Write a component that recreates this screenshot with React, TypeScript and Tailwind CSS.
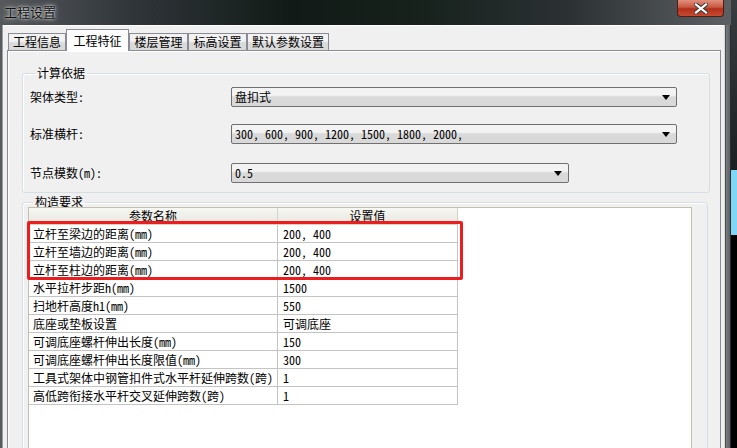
const FONT = '"Noto Sans Mono CJK SC", "Noto Sans CJK SC", sans-serif';

const rows = [
  ["立杆至梁边的距离(mm)", "200, 400"],
  ["立杆至墙边的距离(mm)", "200, 400"],
  ["立杆至柱边的距离(mm)", "200, 400"],
  ["水平拉杆步距h(mm)", "1500"],
  ["扫地杆高度h1(mm)", "550"],
  ["底座或垫板设置", "可调底座"],
  ["可调底座螺杆伸出长度(mm)", "150"],
  ["可调底座螺杆伸出长度限值(mm)", "300"],
  ["工具式架体中钢管扣件式水平杆延伸跨数(跨)", "1"],
  ["高低跨衔接水平杆交叉延伸跨数(跨)", "1"],
];

const tabs = [
  { label: "工程信息", w: "w-[58px]" },
  { label: "工程特征", w: "w-[63px]", active: true },
  { label: "楼层管理", w: "w-[59px]" },
  { label: "标高设置", w: "w-[59px]" },
  { label: "默认参数设置", w: "w-[82px]" },
];

const Arrow = () => (
  <svg width="8" height="5" viewBox="0 0 8 5" className="shrink-0">
    <polygon points="0,0 8,0 4,5" fill="#000" />
  </svg>
);

const Select = ({ value, w }: { value: string; w: string }) => (
  <div
    className={`${w} h-[20px] flex items-center justify-between pl-[3px] pr-[6px] rounded-[2px] border border-[#707070] bg-gradient-to-b from-[#f3f3f3] from-40% to-[#d9d9d9] to-50%`}
  >
    <span className="text-[12px] leading-none text-black whitespace-nowrap">{value}</span>
    <Arrow />
  </div>
);

const App = () => {
  return (
    <div className="w-[737px] h-[448px] overflow-hidden flex bg-black" style={{ fontFamily: FONT }}>
      {/* window */}
      <div className="w-[731px] h-full flex flex-col shrink-0 overflow-hidden">
        {/* title bar */}
        <div className="h-[25px] shrink-0 flex items-start justify-between bg-[linear-gradient(90deg,#55595c_0%,#30353a_18%,#111a16_40%,#17221d_58%,#2c3134_78%,#5c6063_100%)]">
          <span className="pl-[4px] pt-[4px] text-[13px] leading-[16px] text-[#111] [text-shadow:0_0_5px_rgba(255,255,255,0.9),0_0_2px_rgba(255,255,255,0.8)]">
            工程设置
          </span>
          <div className="mr-[7px] w-[47px] h-[17px] flex items-center justify-center rounded-b-[4px] border border-t-0 border-[#4a2018] bg-[linear-gradient(180deg,#e0907f_0%,#c9583f_45%,#b12f1a_55%,#c84a30_100%)]">
            <svg width="14" height="11" viewBox="0 0 14 11">
              <path d="M2 1.5 L12 9.5 M12 1.5 L2 9.5" stroke="#3b3b3b" strokeWidth="4.2" strokeLinecap="square" />
              <path d="M2 1.5 L12 9.5 M12 1.5 L2 9.5" stroke="#ffffff" strokeWidth="2.2" strokeLinecap="square" />
            </svg>
          </div>
        </div>

        <div className="flex-1 min-h-0 flex overflow-hidden">
          {/* left frame */}
          <div className="w-[3px] bg-[#575b5e] border-r border-[#9a9ea1]" />

          {/* client area */}
          <div className="w-[721px] flex flex-col bg-[#f0f0f0] border-t border-white pl-[4px] pr-[3px] overflow-hidden">
            {/* tabs */}
            <div className="h-[24px] shrink-0 flex items-end pl-[1px] relative z-10">
              {tabs.map((t) =>
                t.active ? (
                  <div
                    key={t.label}
                    className={`${t.w} h-[22px] -mb-px flex items-center justify-center border border-b-0 border-[#898c95] bg-[#fcfcfc] text-[12px] text-black`}
                  >
                    {t.label}
                  </div>
                ) : (
                  <div
                    key={t.label}
                    className={`${t.w} h-[17px] flex items-center justify-center border border-b-0 border-[#898c95] bg-gradient-to-b from-[#f2f2f2] from-45% to-[#dadada] to-55% text-[12px] text-black`}
                  >
                    {t.label}
                  </div>
                )
              )}
            </div>

            {/* tab panel */}
            <div className="flex-1 shrink-0 flex flex-col border border-[#898c95] bg-[#f0f0f0] pl-[14px] pr-[10px] shadow-[inset_1px_1px_0_#ffffff]">
              {/* 计算依据 */}
              <fieldset className="shrink-0 mt-[15px] border border-[#d5dfe5] rounded-[3px] pl-[7px] pt-[7px] pb-[9px] shadow-[inset_1px_1px_0_#ffffff]">
                <legend className="ml-[5px] px-[2px] text-[12px] leading-[14px] text-black">计算依据</legend>
                <div className="flex items-center">
                  <span className="w-[201px] text-[12px] text-black">架体类型:</span>
                  <Select value="盘扣式" w="w-[446px]" />
                </div>
                <div className="flex items-center mt-[17px]">
                  <span className="w-[201px] text-[12px] text-black">标准横杆:</span>
                  <Select value="300, 600, 900, 1200, 1500, 1800, 2000," w="w-[446px]" />
                </div>
                <div className="flex items-center mt-[19px]">
                  <span className="w-[201px] text-[12px] text-black">节点模数(m):</span>
                  <Select value="0.5" w="w-[338px]" />
                </div>
              </fieldset>

              {/* 构造要求 */}
              <fieldset className="shrink-0 mt-[3px] mr-[2px] h-[400px] border border-[#d5dfe5] rounded-[3px] pl-[5px] pr-[15px] shadow-[inset_1px_1px_0_#ffffff]">
                <legend className="ml-[5px] px-[2px] text-[12px] leading-[12px] text-black">构造要求</legend>
                <div className="relative -mt-px h-[380px] border border-[#c3c0b0] bg-white">
                  {/* header */}
                  <div className="flex h-[17px]">
                    <div className="w-[249px] flex items-center justify-center border-r border-b border-[#d6d3c6] bg-gradient-to-b from-[#f7f7f3] to-[#e8e7e0] text-[12px] text-black">
                      参数名称
                    </div>
                    <div className="w-[180px] flex items-center justify-center border-r border-b border-[#d6d3c6] bg-gradient-to-b from-[#f7f7f3] to-[#e8e7e0] text-[12px] text-black">
                      设置值
                    </div>
                  </div>
                  {/* rows */}
                  {rows.map(([name, val], i) => (
                    <div key={i} className="flex h-[18px]">
                      <div className="w-[249px] flex items-center pl-[4px] border-r border-b border-[#c4c4c4] overflow-hidden whitespace-nowrap text-[12px] text-black">
                        {name}
                      </div>
                      <div className="w-[180px] flex items-center pl-[5px] border-r border-b border-[#c4c4c4] whitespace-nowrap text-[12px] text-black">
                        {val}
                      </div>
                    </div>
                  ))}
                  {/* red highlight */}
                  <div className="absolute left-[-2px] top-[13px] w-[436px] h-[59px] border-[3px] border-[#ee1d1d] rounded-[2px] pointer-events-none" />
                </div>
              </fieldset>
            </div>
          </div>

          {/* right frame */}
          <div className="w-[7px] flex">
            <div className="w-[1px] bg-[#d8dadb]" />
            <div className="w-[1px] bg-[#4a4e51]" />
            <div className="flex-1 bg-gradient-to-r from-[#7a7e81] to-[#5d6164]" />
            <div className="w-[1px] bg-[#2a2d2f]" />
          </div>
        </div>
      </div>

      {/* desktop behind */}
      <div className="flex-1 flex flex-col">
        <div className="h-[170px] bg-gradient-to-b from-[#3a3d3f] to-[#1c1f21]" />
        <div className="h-[65px] bg-[#7fd6f6]" />
        <div className="flex-1 bg-black" />
      </div>
    </div>
  );
};

export default App;
